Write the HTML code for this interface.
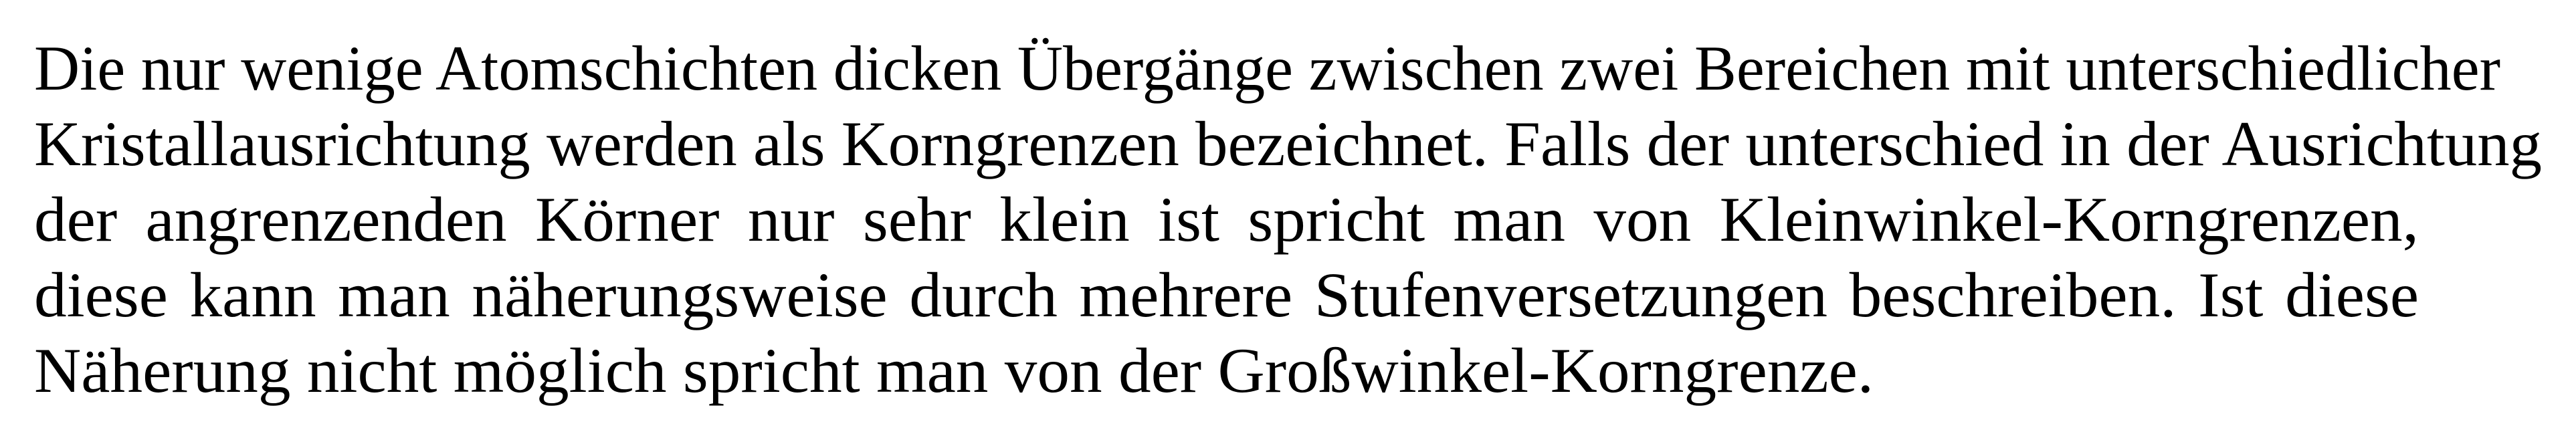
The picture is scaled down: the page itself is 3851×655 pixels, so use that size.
<!DOCTYPE html>
<html><head><meta charset="utf-8">
<style>
html,body{margin:0;padding:0;background:#fff;}
body{width:3851px;height:655px;overflow:hidden;position:relative;}
.t{position:absolute;left:51px;top:46px;width:3750px;font-family:"Liberation Serif","DejaVu Serif",serif;font-size:95px;line-height:113px;color:#000;}
.l{white-space:nowrap;height:113px;}
.l span{display:inline-block;white-space:nowrap;transform-origin:0 0;}
</style></head><body>
<div class="t">
<div class="l" data-w="3687"><span>Die nur wenige Atomschichten dicken Übergänge zwischen zwei Bereichen mit unterschiedlicher</span></div>
<div class="l" data-w="3749"><span>Kristallausrichtung werden als Korngrenzen bezeichnet. Falls der unterschied in der Ausrichtung</span></div>
<div class="l" data-w="3565"><span>der angrenzenden Körner nur sehr klein ist spricht man von Kleinwinkel-Korngrenzen,</span></div>
<div class="l" data-w="3565"><span>diese kann man näherungsweise durch mehrere Stufenversetzungen beschreiben. Ist diese</span></div>
<div class="l"><span>Näherung nicht möglich spricht man von der Großwinkel-Korngrenze.</span></div>
</div>
<script>
(function(){
var F=1.024;
var ls=document.querySelectorAll('.l');
for(var i=0;i<ls.length;i++){
var s=ls[i].firstElementChild;
var w=s.getBoundingClientRect().width;
var f=F;
var W=parseFloat(ls[i].getAttribute('data-w')||'0');
if(W){
if(w*f>W){f=W/w;}
else{
var n=(s.textContent.match(/ /g)||[]).length;
if(n>0){s.style.wordSpacing=((W/f-w)/n)+'px';}
}
}
s.style.transform='scaleX('+f+')';
}
})();
</script>
</body></html>
